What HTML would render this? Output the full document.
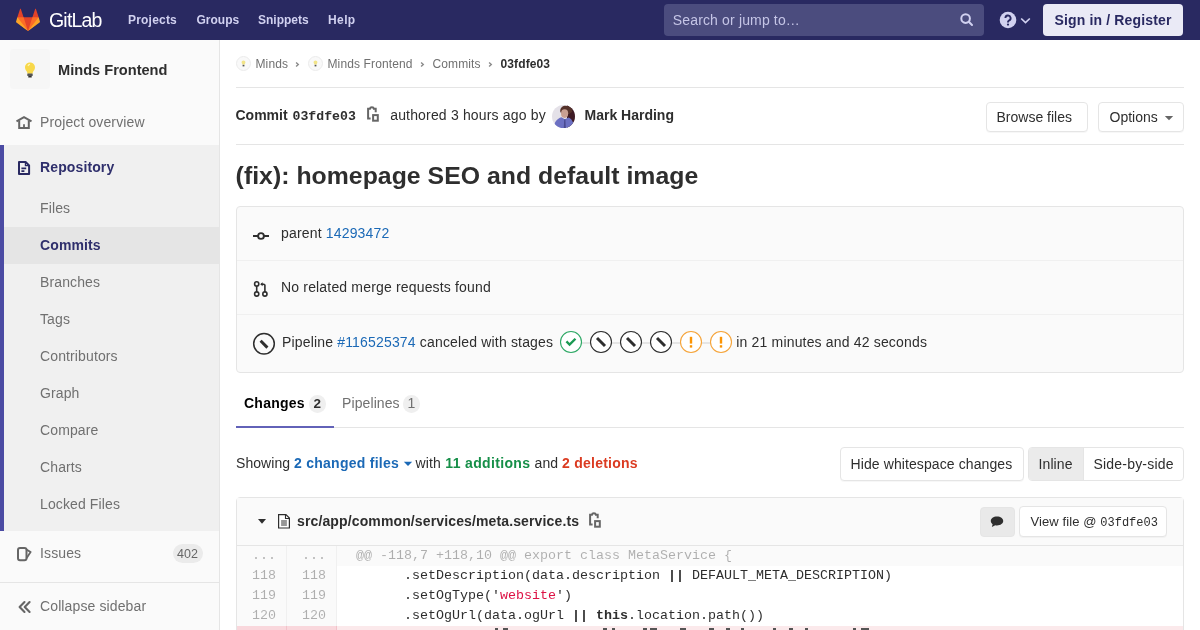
<!DOCTYPE html>
<html><head><meta charset="utf-8">
<style>
*{box-sizing:border-box;}
html,body{margin:0;padding:0;width:1200px;height:630px;overflow:hidden;background:#fff;}
body{font-family:"Liberation Sans",sans-serif;font-size:14px;color:#2e2e2e;position:relative;}
.a{position:absolute;white-space:pre;}
.mono{font-family:"Liberation Mono",monospace;}
.b{font-weight:bold;}
svg{position:absolute;overflow:visible;}
/* header */
#hdr{position:absolute;left:0;top:0;width:1200px;height:40px;background:#292961;}
.nav{position:absolute;top:0;height:40px;line-height:40px;font-size:12px;font-weight:bold;color:#d1d1f0;letter-spacing:0.2px;}
/* sidebar */
#side{position:absolute;left:0;top:40px;width:220px;height:590px;background:#fafafa;border-right:1px solid #e5e5e5;}
.si{position:absolute;left:40px;font-size:14px;color:#707070;line-height:20px;height:20px;white-space:pre;letter-spacing:0.12px;}
.bc{position:absolute;font-size:12px;letter-spacing:0.12px;line-height:20px;color:#707070;white-space:pre;}
.btn{position:absolute;background:#fff;border:1px solid #e5e5e5;border-radius:4px;font-size:14px;color:#2e2e2e;line-height:20px;white-space:pre;box-shadow:0 1px 0 rgba(0,0,0,0.03);}
.lnk{color:#1b69b6;}
.t14{font-size:14px;line-height:20px;height:20px;}
.code{position:absolute;font-family:"Liberation Mono",monospace;font-size:13.33px;line-height:20px;white-space:pre;color:#2e2e2e;}
.ln{position:absolute;font-family:"Liberation Mono",monospace;font-size:13.33px;line-height:20px;white-space:pre;color:rgba(0,0,0,0.3);text-align:right;width:40px;}
</style></head>
<body>
<!-- ============ HEADER ============ -->
<div id="hdr" style="will-change:transform">
  <svg style="left:16px;top:8px" width="24" height="24" viewBox="0 0 36 36">
    <path fill="#e24329" d="M2 14l9.38 9v-9l-4-12.28c-.205-.632-1.176-.632-1.38 0z"/>
    <path fill="#e24329" d="M34 14l-9.38 9v-9l4-12.28c.205-.632 1.176-.632 1.38 0z"/>
    <path fill="#e24329" d="M18,34.38 3,14 33,14 Z"/>
    <path fill="#fc6d26" d="M18,34.38 11.38,14 2,14 6,25Z"/>
    <path fill="#fc6d26" d="M18,34.38 24.62,14 34,14 30,25Z"/>
    <path fill="#fca326" d="M2 14L.1 20.16c-.18.565 0 1.2.5 1.56l17.42 12.66z"/>
    <path fill="#fca326" d="M34 14l1.9 6.16c.18.565 0 1.2-.5 1.56L18 34.38z"/>
  </svg>
  <div class="a" style="left:49px;top:0;line-height:40px;font-size:19.5px;color:#fff;letter-spacing:-0.8px;">GitLab</div>
  <div class="nav" style="left:128px">Projects</div>
  <div class="nav" style="left:196.5px;letter-spacing:0">Groups</div>
  <div class="nav" style="left:258px;letter-spacing:0">Snippets</div>
  <div class="nav" style="left:328px;letter-spacing:0.4px">Help</div>
  <div class="a" style="left:664px;top:4px;width:320px;height:32px;background:#4b4c7e;border-radius:4px;"></div>
  <div class="a" style="left:672.8px;top:10px;line-height:20px;font-size:14px;color:#c5c5e6;letter-spacing:0.15px;">Search or jump to…</div>
  <svg style="left:960px;top:13px" width="14" height="14" viewBox="0 0 14 14">
    <circle cx="5.6" cy="5.6" r="4.3" fill="none" stroke="#d1d1f0" stroke-width="2"/>
    <path d="M8.8 8.8L12 12" stroke="#d1d1f0" stroke-width="2" stroke-linecap="round"/>
  </svg>
  <svg style="left:999px;top:11px" width="18" height="18" viewBox="0 0 18 18">
    <circle cx="9" cy="9" r="8.3" fill="#d1d1f0"/>
    <path d="M6.4 7.1a2.6 2.6 0 1 1 3.6 2.4c-.6.3-1 .7-1 1.4v.5" fill="none" stroke="#292961" stroke-width="1.9"/>
    <circle cx="9" cy="13.6" r="1.1" fill="#292961"/>
  </svg>
  <svg style="left:1020px;top:17px" width="11" height="7" viewBox="0 0 11 7">
    <path d="M1.2 1.5L5.5 5.5L9.8 1.5" fill="none" stroke="#d1d1f0" stroke-width="1.7"/>
  </svg>
  <div class="a b" style="left:1043px;top:4px;width:140px;height:32px;background:#eaeaf6;border-radius:4px;color:#292961;font-size:14px;line-height:32px;text-align:center;letter-spacing:0.15px;">Sign in / Register</div>
</div>

<!-- ============ SIDEBAR ============ -->
<div id="side" style="will-change:transform">
  <div class="a" style="left:10px;top:9px;width:40px;height:40px;background:#f6f6f6;border-radius:4px;"></div>
  <svg style="left:22px;top:21px" width="16" height="18" viewBox="0 0 16 18">
    <path d="M8 1.5c-3 0-5 2.2-5 4.9 0 2 1.2 3 1.9 4.3.4.7.5 1.4.5 2.1h5.2c0-.7.1-1.4.5-2.1.7-1.3 1.9-2.3 1.9-4.3 0-2.7-2-4.9-5-4.9z" fill="#f8d84a"/>
    <path d="M6 5a2.3 2.3 0 0 1 2-1.6" stroke="#fff6b0" stroke-width="1.2" fill="none"/>
    <rect x="5.3" y="12.6" width="5.4" height="2.4" fill="#555" rx=".5"/>
    <rect x="6.2" y="15" width="3.6" height="1.6" fill="#333" rx=".6"/>
  </svg>
  <div class="a b" style="left:58px;top:20px;font-size:14.6px;line-height:20px;color:#2e2e2e;">Minds Frontend</div>

  <svg style="left:16px;top:76px" width="16" height="13" viewBox="0 0 16 13">
    <path d="M0.5 5.4L8 1.2L15.5 5.4" fill="none" stroke="#666" stroke-width="2" stroke-linejoin="miter"/>
    <path d="M3.2 4.5V12H12.8V4.5" fill="none" stroke="#666" stroke-width="2"/>
    <path d="M8 8.2V12" stroke="#666" stroke-width="1.8"/>
  </svg>
  <div class="si" style="top:72px">Project overview</div>

  <div class="a" style="left:0;top:105px;width:219px;height:386px;background:#f0f0f0;"></div>
  <div class="a" style="left:0;top:105px;width:4px;height:386px;background:#4b4ba3;"></div>
  <div class="a" style="left:4px;top:187px;width:215px;height:36.5px;background:#e5e5e5;"></div>
  <svg style="left:18px;top:121px" width="13" height="14" viewBox="0 0 13 14">
    <path d="M1 1H7.6L11.1 4.5V13H1Z" fill="none" stroke="#292961" stroke-width="2" stroke-linejoin="round"/><path d="M7.4 1.2V4.7H11" fill="none" stroke="#292961" stroke-width="1.2"/>
    <path d="M3.4 7.3H8.2M3.4 10.2H6.4" stroke="#292961" stroke-width="1.8"/>
  </svg>
  <div class="si b" style="top:117px;color:#2f2f6c">Repository</div>
  <div class="si" style="top:158px">Files</div>
  <div class="si b" style="top:195px;color:#2f2f6c">Commits</div>
  <div class="si" style="top:232px">Branches</div>
  <div class="si" style="top:269px">Tags</div>
  <div class="si" style="top:306px">Contributors</div>
  <div class="si" style="top:343px">Graph</div>
  <div class="si" style="top:380px">Compare</div>
  <div class="si" style="top:417px">Charts</div>
  <div class="si" style="top:454px">Locked Files</div>

  <svg style="left:17px;top:507px" width="15" height="14" viewBox="0 0 15 14">
    <rect x="1" y="1" width="8.5" height="12.2" rx="2" fill="none" stroke="#666" stroke-width="2"/>
    <path d="M9.5 2.6L13.6 5L9.5 11.3" fill="none" stroke="#666" stroke-width="1.8" stroke-linejoin="round"/>
  </svg>
  <div class="si" style="top:503px">Issues</div>
  <div class="a" style="left:172.5px;top:504px;width:30px;height:19px;border-radius:10px;background:#ebebeb;font-size:12.5px;line-height:21px;text-align:center;color:#666;">402</div>

  <div class="a" style="left:0;top:542px;width:219px;height:1px;background:#e5e5e5;"></div>
  <svg style="left:18px;top:561px" width="13" height="12" viewBox="0 0 13 12">
    <path d="M6.5 1L1.6 6L6.5 11M11.6 1L6.7 6L11.6 11" fill="none" stroke="#666" stroke-width="2.1" stroke-linecap="round" stroke-linejoin="round"/>
  </svg>
  <div class="si" style="top:556px">Collapse sidebar</div>
</div>

<!-- ============ MAIN ============ -->
<div id="main" style="position:absolute;left:0;top:0;width:1200px;height:630px;will-change:transform">
<!-- breadcrumbs -->
<svg style="left:236px;top:56px" width="15" height="15" viewBox="0 0 15 15">
  <circle cx="7.5" cy="7.5" r="7" fill="#f9f9f9" stroke="#ebebeb" stroke-width="1"/>
  <path d="M7.5 4.6c-1.1 0-1.9.8-1.9 1.8 0 .8.7 1.2.8 2h2.2c.1-.8.8-1.2.8-2 0-1-.8-1.8-1.9-1.8z" fill="#f2e488"/>
  <rect x="6.6" y="8.8" width="1.8" height="1.6" fill="#555"/>
</svg>
<div class="bc" style="left:255.5px;top:54px">Minds</div>
<svg style="left:293.5px;top:59.5px" width="6" height="9" viewBox="0 0 6 9"><path d="M2.1 2.4L4.3 4.5L2.1 6.6" fill="none" stroke="#8a8a8a" stroke-width="1.4"/></svg>
<svg style="left:308px;top:56px" width="15" height="15" viewBox="0 0 15 15">
  <circle cx="7.5" cy="7.5" r="7" fill="#f9f9f9" stroke="#ebebeb" stroke-width="1"/>
  <path d="M7.5 4.6c-1.1 0-1.9.8-1.9 1.8 0 .8.7 1.2.8 2h2.2c.1-.8.8-1.2.8-2 0-1-.8-1.8-1.9-1.8z" fill="#f2e488"/>
  <rect x="6.6" y="8.8" width="1.8" height="1.6" fill="#555"/>
</svg>
<div class="bc" style="left:327.5px;top:54px">Minds Frontend</div>
<svg style="left:418.5px;top:59.5px" width="6" height="9" viewBox="0 0 6 9"><path d="M2.1 2.4L4.3 4.5L2.1 6.6" fill="none" stroke="#8a8a8a" stroke-width="1.4"/></svg>
<div class="bc" style="left:432.5px;top:54px">Commits</div>
<svg style="left:486.5px;top:59.5px" width="6" height="9" viewBox="0 0 6 9"><path d="M2.1 2.4L4.3 4.5L2.1 6.6" fill="none" stroke="#8a8a8a" stroke-width="1.4"/></svg>
<div class="bc b" style="left:500.5px;top:54px;color:#2e2e2e">03fdfe03</div>
<div class="a" style="left:236px;top:87px;width:948px;height:1px;background:#e5e5e5"></div>

<!-- commit header -->
<div class="a b t14" style="left:235.5px;top:105px">Commit</div>
<div class="a b mono" style="left:292.5px;top:107px;font-size:13.2px;line-height:20px">03fdfe03</div>
<svg style="left:366px;top:106px" width="14" height="17" viewBox="0 0 14 17">
  <path d="M4.6 12.6H2.1V2.8H3.9C4.1 1.6 4.9 1.2 5.9 1.2C6.9 1.2 7.7 1.6 7.9 2.8H9.7V6.2" fill="none" stroke="#666" stroke-width="2" stroke-linejoin="miter"/>
  <rect x="7.1" y="9.1" width="4.7" height="5.6" fill="none" stroke="#666" stroke-width="2"/>
</svg>
<div class="a t14" style="left:390.2px;top:105px;letter-spacing:0.17px">authored 3 hours ago by</div>
<svg style="left:552px;top:104.5px" width="23" height="23" viewBox="0 0 23 23">
  <defs><clipPath id="av"><circle cx="11.5" cy="11.5" r="11.5"/></clipPath></defs>
  <g clip-path="url(#av)">
    <rect width="23" height="23" fill="#e4e1e8"/>
    <path d="M15 0H23V23H15Z" fill="#3e1a24"/>
    <path d="M8.2 6.5C8 2.5 11 0.5 14.5 0.8C18 1 20.5 3.5 20 7L17 9L9 8Z" fill="#55322a"/>
    <ellipse cx="12.6" cy="8.6" rx="3.6" ry="4.3" fill="#c9a092"/>
    <path d="M1.5 23C2 17.5 5 13.5 9.5 12.3L12.8 14.3L16.5 12.5C19.5 13.5 21.5 16.5 22 23Z" fill="#6c70c2"/>
    <path d="M12.2 14.2H13.4L13.8 23H11.8Z" fill="#4a4a90"/>
    <path d="M0 14C2 17 3 20 2.5 23H0Z" fill="#e8e6ee"/>
  </g>
</svg>
<div class="a b t14" style="left:584.5px;top:105px">Mark Harding</div>
<div class="btn" style="left:986px;top:102px;width:102px;height:30px;padding:4px 0 0 9.5px">Browse files</div>
<div class="btn" style="left:1098px;top:102px;width:86px;height:30px;padding:4px 0 0 10.5px">Options</div>
<svg style="left:1164px;top:115px" width="10" height="6" viewBox="0 0 10 6"><path d="M0.8 1H9.2L5 5.2Z" fill="#666"/></svg>
<div class="a" style="left:236px;top:144px;width:948px;height:1px;background:#e5e5e5"></div>

<!-- title -->
<div class="a b" style="left:235.6px;top:160.5px;letter-spacing:0.03px;font-size:24.8px;line-height:30px;color:#2e2e2e">(fix): homepage SEO and default image</div>

<!-- info box -->
<div class="a" style="left:236px;top:206px;width:948px;height:167px;background:#fafafa;border:1px solid #e5e5e5;border-radius:4px"></div>
<div class="a" style="left:237px;top:260px;width:946px;height:1px;background:#f0f0f0"></div>
<div class="a" style="left:237px;top:314px;width:946px;height:1px;background:#f0f0f0"></div>
<svg style="left:252px;top:231px" width="18" height="10" viewBox="0 0 18 10">
  <circle cx="9" cy="5" r="2.9" fill="none" stroke="#2e2e2e" stroke-width="1.9"/>
  <path d="M1 5H6M12 5H17" stroke="#2e2e2e" stroke-width="1.9"/>
</svg>
<div class="a t14" style="left:281px;top:223px;letter-spacing:0.17px">parent <span class="lnk">14293472</span></div>
<svg style="left:252px;top:280px" width="16" height="18" viewBox="0 0 16 18">
  <circle cx="4.7" cy="3.9" r="2.1" fill="none" stroke="#2e2e2e" stroke-width="1.6"/>
  <circle cx="4.7" cy="14" r="2.1" fill="none" stroke="#2e2e2e" stroke-width="1.6"/>
  <circle cx="12.9" cy="14" r="2.1" fill="none" stroke="#2e2e2e" stroke-width="1.6"/>
  <path d="M4.7 6V11.9M12.9 11.9V5.2L11.8 4.2H9" fill="none" stroke="#2e2e2e" stroke-width="1.6"/>
  <path d="M10.6 2.2V6.2L8.2 4.2Z" fill="#2e2e2e"/>
</svg>
<div class="a t14" style="left:281px;top:277px;letter-spacing:0.17px">No related merge requests found</div>
<svg style="left:252px;top:332px" width="24" height="24" viewBox="0 0 24 24">
  <circle cx="12" cy="11.8" r="10.3" fill="none" stroke="#2e2e2e" stroke-width="1.5"/>
  <path d="M8.6 8.8L15.4 15.6" stroke="#2e2e2e" stroke-width="3" stroke-linecap="butt"/>
</svg>
<div class="a t14" style="left:282px;top:331.5px;letter-spacing:0.17px">Pipeline <span class="lnk">#116525374</span> canceled with stages</div>
<div class="a" style="left:581px;top:342px;width:130px;height:2px;background:#e5e5e5"></div>
<svg style="left:560px;top:331px" width="22" height="22" viewBox="0 0 22 22"><circle cx="11" cy="11" r="10.5" fill="#fff" stroke="#2ea865" stroke-width="1.1"/><path d="M7.3 11.3L9.6 13.6L14.6 8.6" fill="none" stroke="#1a9a52" stroke-width="2.4" stroke-linecap="square" stroke-linejoin="miter"/></svg>
<svg style="left:590px;top:331px" width="22" height="22" viewBox="0 0 22 22"><circle cx="11" cy="11" r="10.5" fill="#fff" stroke="#2e2e2e" stroke-width="1.1"/><path d="M7 7L15 15" stroke="#2e2e2e" stroke-width="3"/></svg>
<svg style="left:620px;top:331px" width="22" height="22" viewBox="0 0 22 22"><circle cx="11" cy="11" r="10.5" fill="#fff" stroke="#2e2e2e" stroke-width="1.1"/><path d="M7 7L15 15" stroke="#2e2e2e" stroke-width="3"/></svg>
<svg style="left:650px;top:331px" width="22" height="22" viewBox="0 0 22 22"><circle cx="11" cy="11" r="10.5" fill="#fff" stroke="#2e2e2e" stroke-width="1.1"/><path d="M7 7L15 15" stroke="#2e2e2e" stroke-width="3"/></svg>
<svg style="left:680px;top:331px" width="22" height="22" viewBox="0 0 22 22"><circle cx="11" cy="11" r="10.5" fill="#fff" stroke="#f5a43a" stroke-width="1.1"/><path d="M11 5.8V12.6" stroke="#fc9403" stroke-width="2.4"/><rect x="9.8" y="14.2" width="2.4" height="2.4" fill="#fc9403"/></svg>
<svg style="left:710px;top:331px" width="22" height="22" viewBox="0 0 22 22"><circle cx="11" cy="11" r="10.5" fill="#fff" stroke="#f5a43a" stroke-width="1.1"/><path d="M11 5.8V12.6" stroke="#fc9403" stroke-width="2.4"/><rect x="9.8" y="14.2" width="2.4" height="2.4" fill="#fc9403"/></svg>

<div class="a t14" style="left:736.3px;top:331.5px;letter-spacing:0.17px">in 21 minutes and 42 seconds</div>

<!-- tabs -->
<div class="a" style="left:236px;top:427px;width:948px;height:1px;background:#e5e5e5"></div>
<div class="a" style="left:236px;top:426px;width:98px;height:2px;background:#6262b8"></div>
<div class="a b t14" style="left:244px;top:393px;color:#000;letter-spacing:0.25px">Changes</div>
<div class="a" style="left:308.5px;top:395px;width:17.5px;height:18px;border-radius:9px;background:#efefef;color:#2e2e2e;font-size:13.5px;font-weight:bold;line-height:18px;text-align:center">2</div>
<div class="a t14" style="left:342px;top:393px;color:#707070;letter-spacing:0.1px">Pipelines</div>
<div class="a" style="left:403px;top:395px;width:17px;height:18px;border-radius:9px;background:#efefef;color:#707070;font-size:14px;line-height:17px;text-align:center">1</div>

<!-- showing -->
<div class="a t14" style="left:236px;top:453px;letter-spacing:0.05px">Showing</div><div class="a t14 b lnk" style="left:294px;top:453px;letter-spacing:0.26px">2 changed files</div><div class="a t14" style="left:415.5px;top:453px;letter-spacing:0.1px">with</div><div class="a t14 b" style="left:445.3px;top:453px;letter-spacing:0.35px;color:#168f48">11 additions</div><div class="a t14" style="left:534.5px;top:453px;letter-spacing:0.1px">and</div><div class="a t14 b" style="left:562px;top:453px;letter-spacing:0.25px;color:#db3b21">2 deletions</div>
<svg style="left:403px;top:461px" width="10" height="6" viewBox="0 0 10 6"><path d="M0.8 0.8H9.2L5 5Z" fill="#1b69b6"/></svg>
<div class="btn" style="left:840px;top:447px;width:184px;height:34px;padding:6px 0 0 9.5px;letter-spacing:0.1px">Hide whitespace changes</div>
<div class="a" style="left:1028px;top:447px;width:156px;height:34px;border:1px solid #e5e5e5;border-radius:4px;background:#fff;overflow:hidden">
  <div class="a" style="left:0;top:0;width:55px;height:32px;background:#ebebeb;border-right:1px solid #e5e5e5"></div>
</div>
<div class="a t14" style="left:1038.5px;top:454px;letter-spacing:0.1px">Inline</div>
<div class="a t14" style="left:1093.5px;top:454px;letter-spacing:0.2px">Side-by-side</div>

<!-- file -->
<div class="a" style="left:236px;top:497px;width:948px;height:140px;border:1px solid #e5e5e5;border-radius:4px 4px 0 0;background:#fff"></div>
<div class="a" style="left:237px;top:498px;width:946px;height:48px;background:#fafafa;border-bottom:1px solid #e5e5e5"></div>
<svg style="left:258px;top:518.5px" width="8" height="5" viewBox="0 0 8 5"><path d="M0 0H8L4 4.7Z" fill="#2e2e2e"/></svg>
<svg style="left:278px;top:513.5px" width="12" height="15" viewBox="0 0 12 15">
  <path d="M0.6 0.6H7.9L11.4 4.1V14H0.6Z" fill="#fff" stroke="#2e2e2e" stroke-width="1.2" stroke-linejoin="miter"/>
  <path d="M7.5 0.6V4.5H11.4" fill="none" stroke="#2e2e2e" stroke-width="1.1"/>
  <path d="M3.1 7H8.9M3.1 9H8.9M3.1 11H8.9" stroke="#2e2e2e" stroke-width="1"/>
</svg>
<div class="a b t14" style="left:297px;top:511px;letter-spacing:0.13px">src/app/common/services/meta.service.ts</div>
<svg style="left:588px;top:512px" width="14" height="17" viewBox="0 0 14 17">
  <path d="M4.6 12.6H2.1V2.8H3.9C4.1 1.6 4.9 1.2 5.9 1.2C6.9 1.2 7.7 1.6 7.9 2.8H9.7V6.2" fill="none" stroke="#666" stroke-width="2" stroke-linejoin="miter"/>
  <rect x="7.1" y="9.1" width="4.7" height="5.6" fill="none" stroke="#666" stroke-width="2"/>
</svg>
<div class="a" style="left:980px;top:507px;width:35px;height:30px;border-radius:4px;background:#e9e9e9;border:1px solid #e5e5e5"></div>
<svg style="left:989px;top:515px" width="16" height="14" viewBox="0 0 16 14">
  <path d="M8 1.5C4.4 1.5 1.8 3.5 1.8 6c0 1.3.7 2.4 1.8 3.2L2.9 12l3.4-1.8c.5.1 1.1.2 1.7.2 3.6 0 6.2-2 6.2-4.4S11.6 1.5 8 1.5z" fill="#2e2e2e"/>
</svg>
<div class="btn" style="left:1019px;top:506px;width:148px;height:31px;padding:5px 0 0 10.5px;font-size:13px;letter-spacing:0.1px">View file @ <span class="mono" style="font-size:12px;letter-spacing:0">03fdfe03</span></div>

<!-- diff -->
<div class="a" style="left:237px;top:546px;width:946px;height:20px;background:#fafafa"></div>
<div class="a" style="left:237px;top:566px;width:99px;height:64px;background:#fafafa"></div>
<div class="a" style="left:286px;top:546px;width:1px;height:84px;background:#f0f0f0"></div>
<div class="a" style="left:336px;top:546px;width:1px;height:84px;background:#f0f0f0"></div>
<div class="a" style="left:237px;top:626px;width:946px;height:4px;background:#fbe9eb"></div>
<div class="a" style="left:237px;top:626px;width:99px;height:4px;background:#f9d7dc"></div><div class="a" style="left:286px;top:626px;width:1px;height:4px;background:#f2c2ca"></div><div class="a" style="left:336px;top:626px;width:1px;height:4px;background:#f2c2ca"></div>
<div class="ln" style="left:236px;top:546px">...</div><div class="ln" style="left:286px;top:546px">...</div>
<div class="code" style="left:356px;top:546px"><span style="color:rgba(0,0,0,0.3)">@@ -118,7 +118,10 @@ export class MetaService {</span></div>
<div class="ln" style="left:236px;top:566px">118</div><div class="ln" style="left:286px;top:566px">118</div>
<div class="code" style="left:340px;top:566px">        .setDescription(data.description <b>||</b> DEFAULT_META_DESCRIPTION)</div>
<div class="ln" style="left:236px;top:586px">119</div><div class="ln" style="left:286px;top:586px">119</div>
<div class="code" style="left:340px;top:586px">        .setOgType('<span style="color:#d14">website</span>')</div>
<div class="ln" style="left:236px;top:606px">120</div><div class="ln" style="left:286px;top:606px">120</div>
<div class="code" style="left:340px;top:606px">        .setOgUrl(data.ogUrl <b>||</b> <b>this</b>.location.path())</div>
<div class="a" style="left:495px;top:627.6px;width:3.0px;height:3px;background:#555"></div><div class="a" style="left:503px;top:627.6px;width:4.5px;height:3px;background:#555"></div><div class="a" style="left:603px;top:627.6px;width:4.0px;height:3px;background:#555"></div><div class="a" style="left:611.7px;top:627.6px;width:3.3px;height:3px;background:#555"></div><div class="a" style="left:642.5px;top:627.6px;width:4.2px;height:3px;background:#555"></div><div class="a" style="left:650px;top:627.6px;width:6.7px;height:3px;background:#555"></div><div class="a" style="left:680px;top:627.6px;width:5.5px;height:3px;background:#555"></div><div class="a" style="left:709px;top:627.6px;width:5.0px;height:3px;background:#555"></div><div class="a" style="left:726px;top:627.6px;width:3.5px;height:3px;background:#555"></div><div class="a" style="left:740.5px;top:627.6px;width:3.5px;height:3px;background:#555"></div><div class="a" style="left:772.6px;top:627.6px;width:3.4px;height:3px;background:#555"></div><div class="a" style="left:789px;top:627.6px;width:4.0px;height:3px;background:#555"></div><div class="a" style="left:804.8px;top:627.6px;width:3.6px;height:3px;background:#555"></div><div class="a" style="left:852.5px;top:627.6px;width:3.5px;height:3px;background:#555"></div><div class="a" style="left:860.7px;top:627.6px;width:8.3px;height:3px;background:#555"></div>
</div>
</body></html>
